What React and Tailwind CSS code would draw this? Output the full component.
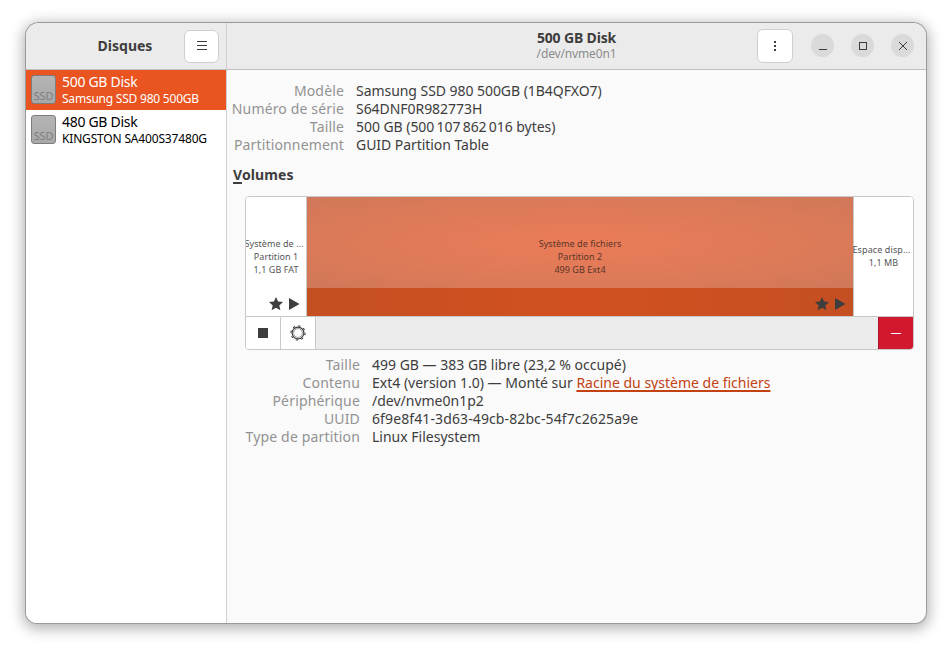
const font = { fontFamily: '"Noto Sans", sans-serif' };

const diskInfo = [
  ["Modèle", "Samsung SSD 980 500GB (1B4QFXO7)"],
  ["Numéro de série", "S64DNF0R982773H"],
  ["Taille", "500 GB (500\u202f107\u202f862\u202f016 bytes)"],
  ["Partitionnement", "GUID Partition Table"],
];

const volumeInfo = [
  ["Taille", "499 GB — 383 GB libre (23,2 % occupé)"],
  ["Contenu", "Ext4 (version 1.0) — Monté sur "],
  ["Périphérique", "/dev/nvme0n1p2"],
  ["UUID", "6f9e8f41-3d63-49cb-82bc-54f7c2625a9e"],
  ["Type de partition", "Linux Filesystem"],
];

function SsdIcon() {
  return (
    <div className="w-[25px] h-[29px] -mt-[1px] rounded-[3px] border border-[#7d7d7d] bg-gradient-to-b from-[#b4b4b4] to-[#a8a8a8] flex items-end justify-center shrink-0 overflow-hidden">
      <span className="text-[11px] leading-[15px] text-[#808080] tracking-[-0.2px]">SSD</span>
    </div>
  );
}

function StarPlay() {
  return (
    <svg width="34" height="14" viewBox="0 0 34 14" fill="#3d3d3d">
      <path d="M8 0l2.1 4.6 4.9 0.5-3.7 3.3 1.1 4.9L8 10.8l-4.4 2.5 1.1-4.9L1 5.1l4.9-0.5z" />
      <path d="M21 1l10.5 6L21 13z" />
    </svg>
  );
}

function WinButton({ children }) {
  return (
    <div className="w-[23px] h-[23px] rounded-full bg-[#dadada] flex items-center justify-center">
      <svg width="10" height="10" viewBox="0 0 10 10" fill="none" stroke="#3d3d3d" strokeWidth="1">
        {children}
      </svg>
    </div>
  );
}

export default function App() {
  return (
    <div className="w-[952px] h-[652px] bg-white pt-[23px] pl-[26px] overflow-hidden" style={font}>
      <div className="w-[900px] h-[600px] rounded-t-[13px] rounded-b-[11px] overflow-hidden bg-[#fafafa] flex flex-col shadow-[0_0_0_1px_#9a9a9a,0_3px_14px_3px_rgba(0,0,0,0.3)]">
        {/* Header */}
        <header className="h-[47px] bg-[#ebebeb] border-b border-[#c0c0c0] flex shrink-0">
          <div className="w-[201px] border-r border-[#d0d0d0] flex items-center shrink-0">
            <span className="w-[158px] pl-[40px] pb-[2px] text-center text-[14px] font-bold text-[#3d3d3d]">Disques</span>
            <button className="w-[35px] h-[33px] bg-white rounded-[6px] border border-[#cfcfcf] flex items-center justify-center">
              <svg width="12" height="10" viewBox="0 0 12 10" stroke="#3d3d3d" strokeWidth="1">
                <path d="M1 .5h10M1 4.5h10M1 8.5h10" />
              </svg>
            </button>
          </div>
          <div className="flex-1 flex items-center relative">
            <div className="w-[699px] pb-[2px] flex flex-col items-center">
              <span className="text-[14px] leading-[17px] font-bold text-[#3d3d3d] tracking-[-0.15px]">500 GB Disk</span>
              <span className="text-[12px] leading-[15px] text-[#8c8c8c] tracking-[-0.15px]">/dev/nvme0n1</span>
            </div>
            <button className="absolute left-[530px] top-[6px] w-[36px] h-[34px] bg-white rounded-[6px] border border-[#cfcfcf] flex items-center justify-center">
              <svg width="4" height="12" viewBox="0 0 4 12" fill="#3d3d3d">
                <rect x="1" y="1" width="2" height="2" />
                <rect x="1" y="5" width="2" height="2" />
                <rect x="1" y="9" width="2" height="2" />
              </svg>
            </button>
            <div className="absolute left-[584px] top-[11px] flex gap-[17px]">
              <WinButton><path d="M1 8.5h8" /></WinButton>
              <WinButton><rect x="1.5" y="1.5" width="7" height="7" /></WinButton>
              <WinButton><path d="M1 1l8 8M9 1l-8 8" /></WinButton>
            </div>
          </div>
        </header>

        <div className="flex flex-1 min-h-0">
          {/* Sidebar */}
          <aside className="w-[201px] bg-white border-r border-[#d0d0d0] shrink-0">
            <div className="h-[40px] bg-[#e95420] flex items-center gap-[6px] pl-[5px] text-white">
              <SsdIcon />
              <div className="flex flex-col pb-[2px]">
                <span className="text-[14px] leading-[18px] tracking-[-0.3px]">500 GB Disk</span>
                <span className="text-[12px] leading-[15px] tracking-[-0.22px]">Samsung SSD 980 500GB</span>
              </div>
            </div>
            <div className="h-[40px] flex items-center gap-[6px] pl-[5px] text-black">
              <SsdIcon />
              <div className="flex flex-col pb-[2px]">
                <span className="text-[14px] leading-[18px] tracking-[-0.3px]">480 GB Disk</span>
                <span className="text-[12px] leading-[15px] tracking-[-0.17px]">KINGSTON SA400S37480G</span>
              </div>
            </div>
          </aside>

          {/* Main */}
          <main className="flex-1 min-w-0 pt-[12px] text-[14px] leading-[18px]">
            <div className="grid grid-cols-[117px_1fr] gap-x-[12px] pr-2">
              {diskInfo.map(([k, v]) => (
                <div key={k} className="contents">
                  <span className="text-right text-[#929292] whitespace-nowrap tracking-[0.15px]">{k}</span>
                  <span className="text-[#3d3d3d] whitespace-nowrap tracking-[-0.05px]">{v}</span>
                </div>
              ))}
            </div>

            <h2 className="mt-[12px] ml-[6px] text-[14px] font-bold text-[#3d3d3d] leading-[18px] tracking-[0.1px]">
              <span className="underline decoration-2 underline-offset-[2px] [text-decoration-skip-ink:none]">V</span>olumes
            </h2>

            <div className="ml-[18px] mt-[12px] w-[669px] h-[154px] rounded-[4px] border border-[#c8c8c8] overflow-hidden flex flex-col bg-white">
              <div className="h-[120px] flex border-b border-[#c8c8c8] shrink-0">
                <div className="w-[61px] border-r border-[#c8c8c8] bg-white relative flex flex-col items-center pt-[40px] text-[9px] leading-[13px] tracking-[0.05px] text-[#555] shrink-0">
                  <span className="whitespace-nowrap -ml-[4px]">Système de ...</span>
                  <span>Partition 1</span>
                  <span>1,1 GB FAT</span>
                  <div className="absolute right-[4px] bottom-[5px]"><StarPlay /></div>
                </div>
                <div className="flex-1 flex flex-col min-w-0">
                  <div className="h-[91px] bg-[radial-gradient(ellipse_at_center,#ec7c58_0%,#dc7a58_60%,#d0785a_100%)] flex flex-col items-center pt-[40px] text-[9px] leading-[13px] tracking-[0.05px] text-[#5a3528]">
                    <span>Système de fichiers</span>
                    <span>Partition 2</span>
                    <span>499 GB Ext4</span>
                  </div>
                  <div className="flex-1 bg-gradient-to-r from-[#c44f22] via-[#d2501f] to-[#c44f22] flex items-center justify-end pr-[5px] pt-[4px]">
                    <StarPlay />
                  </div>
                </div>
                <div className="w-[60px] border-l border-[#c8c8c8] bg-white flex flex-col items-center pt-[46px] text-[9px] leading-[13px] tracking-[0.1px] text-[#555] shrink-0">
                  <span className="whitespace-nowrap -ml-[4px]">Espace disp...</span>
                  <span>1,1 MB</span>
                </div>
              </div>
              <div className="flex-1 flex bg-[#ebebeb]">
                <div className="w-[35px] bg-white border-r border-[#c8c8c8] flex items-center justify-center">
                  <div className="w-[10px] h-[10px] bg-[#3d3d3d]" />
                </div>
                <div className="w-[35px] bg-white border-r border-[#c8c8c8] flex items-center justify-center">
                  <svg width="16" height="16" viewBox="0 0 16 16" fill="none" stroke="#3d3d3d">
                    <circle cx="8" cy="8" r="4.4" strokeWidth="0.8" strokeOpacity="0.6" />
                    <circle cx="8" cy="8" r="5.9" strokeWidth="1.2" />
                    <circle cx="8" cy="8" r="7.1" strokeWidth="1.1" strokeDasharray="2.2 3.38" />
                  </svg>
                </div>
                <div className="flex-1" />
                <div className="w-[35px] bg-[#d2182f] border-l border-[#a8142a] flex items-center justify-center">
                  <div className="w-[10px] h-px bg-white" />
                </div>
              </div>
            </div>

            <div className="grid grid-cols-[133px_1fr] gap-x-[12px] mt-[6px] pr-2">
              {volumeInfo.map(([k, v]) => (
                <div key={k} className="contents">
                  <span className="text-right text-[#929292] whitespace-nowrap tracking-[0.17px]">{k}</span>
                  <span className={k === "UUID" ? "text-[#3d3d3d] whitespace-nowrap tracking-[0.11px]" : "text-[#3d3d3d] whitespace-nowrap"}>
                    {v}
                    {k === "Contenu" && (
                      <span className="text-[#c34113] underline decoration-2 underline-offset-[2px] [text-decoration-skip-ink:none]">Racine du système de fichiers</span>
                    )}
                  </span>
                </div>
              ))}
            </div>
          </main>
        </div>
      </div>
    </div>
  );
}
